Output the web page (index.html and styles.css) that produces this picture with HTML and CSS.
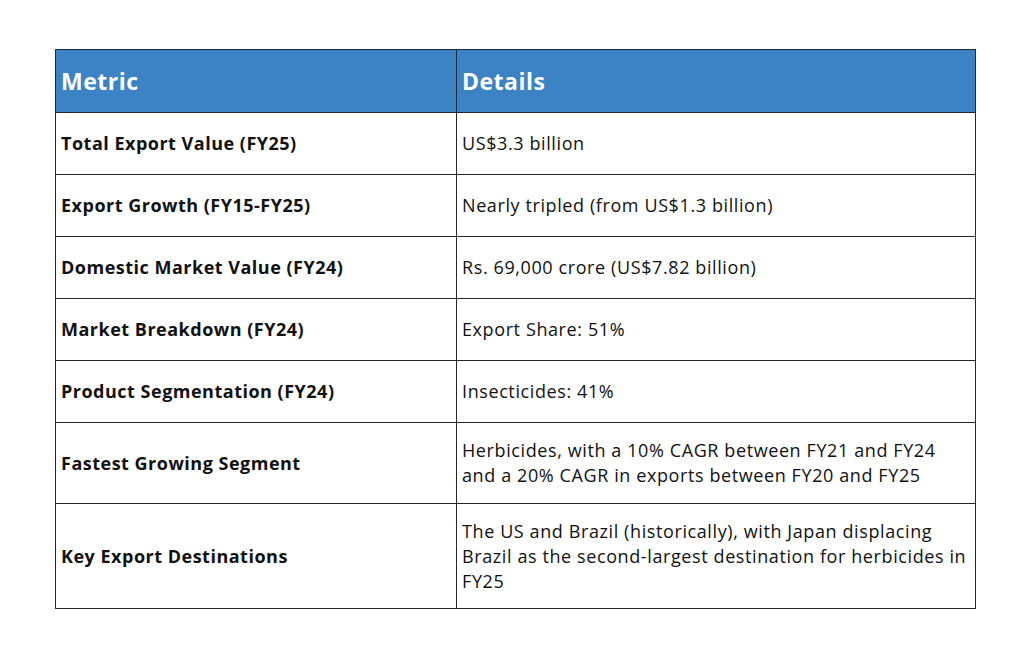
FILE: index.html
```html
<!DOCTYPE html>
<html>
<head>
<meta charset="utf-8">
<link rel="stylesheet" href="styles.css">
</head>
<body>
<div class="page">
<table class="data">
  <thead>
    <tr><th class="c1">Metric</th><th>Details</th></tr>
  </thead>
  <tbody>
    <tr><td class="metric">Total Export Value (FY25)</td><td>US$3.3 billion</td></tr>
    <tr><td class="metric">Export Growth (FY15-FY25)</td><td>Nearly tripled (from US$1.3 billion)</td></tr>
    <tr><td class="metric">Domestic Market Value (FY24)</td><td>Rs. 69,000 crore (US$7.82 billion)</td></tr>
    <tr><td class="metric">Market Breakdown (FY24)</td><td>Export Share: 51%</td></tr>
    <tr><td class="metric">Product Segmentation (FY24)</td><td>Insecticides: 41%</td></tr>
    <tr><td class="metric">Fastest Growing Segment</td><td>Herbicides, with a 10% CAGR between FY21 and FY24 and a 20% CAGR in exports between FY20 and FY25</td></tr>
    <tr class="last"><td class="metric">Key Export Destinations</td><td>The US and Brazil (historically), with Japan displacing Brazil as the second-largest destination for herbicides in FY25</td></tr>
  </tbody>
</table>
</div>
</body>
</html>
```

FILE: styles.css
```css
html, body { margin: 0; padding: 0; background: #fff; }
.page { padding: 49px 0 0 55px; }
.data {
  border-collapse: collapse;
  width: 921px;
  table-layout: fixed;
  font-family: "Open Sans", "Liberation Sans", sans-serif;
  color: #111;
}
.data th, .data td {
  border: 1.5px solid #262626;
  text-align: left;
  vertical-align: middle;
  padding: 15px 3px 15px 5px;
}
.data th.c1 { width: 392px; }
.data thead th {
  background: #3b83c5;
  color: #fff;
  font-size: 23px;
  letter-spacing: 0.5px;
  font-weight: 700;
  height: 32px;
  border-color: #1e2a38;
}
.data td {
  font-size: 18px;
  letter-spacing: 0.6px;
  line-height: 25px;
  height: 31px;
}
.data tr.last td { padding-bottom: 14px; }
.data td.metric { font-weight: 700; letter-spacing: 0.5px; }
```
